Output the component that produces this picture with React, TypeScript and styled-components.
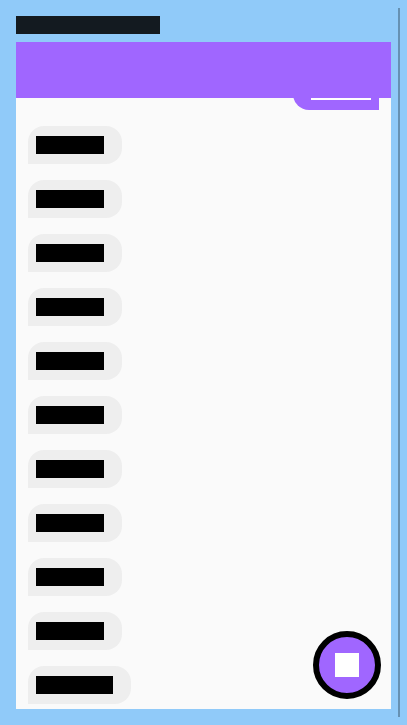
import React from "react";
import styled, { createGlobalStyle } from "styled-components";

const GlobalStyle = createGlobalStyle`
  *, *::before, *::after { box-sizing: border-box; }
  body {
    margin: 0;
    background: #90caf9;
    font-family: Roboto, "Liberation Sans", sans-serif;
  }
`;

const Page = styled.div`
  height: 100vh;
  padding: 8px 7px 8px 8px;
`;

const Column = styled.main`
  display: flex;
  flex-direction: column;
  gap: 8px;
  height: 100%;
  padding: 8px 7px 8px 8px;
  border-right: 2px solid #6691b3;
`;

const Bar = styled.span<{ $width: number; $color: string }>`
  display: block;
  width: ${(p) => p.$width}px;
  height: 18px;
  background: ${(p) => p.$color};
`;

const Panel = styled.section`
  position: relative;
  display: flex;
  flex: 1;
  flex-direction: column;
  min-height: 0;
  background: #fafafa;
`;

const Header = styled.header`
  flex: none;
  height: 56px;
  background: #a066ff;
`;

const Messages = styled.ul`
  display: flex;
  flex: 1;
  flex-direction: column;
  justify-content: flex-end;
  gap: 16px;
  min-height: 0;
  margin: 0;
  padding: 0 12px 5px;
  overflow: hidden;
  list-style: none;
`;

const Bubble = styled.li<{ $own: boolean }>`
  flex: none;
  align-self: ${(p) => (p.$own ? "flex-end" : "flex-start")};
  padding: ${(p) => (p.$own ? "10px 8px 10px 18px" : "10px 18px 10px 8px")};
  border-radius: ${(p) => (p.$own ? "16px 16px 0 16px" : "16px 16px 16px 0")};
  background: ${(p) => (p.$own ? "#a066ff" : "#eeeeee")};
`;

const ActionButton = styled.button`
  position: absolute;
  right: 10px;
  bottom: 10px;
  display: flex;
  align-items: center;
  justify-content: center;
  width: 68px;
  height: 68px;
  padding: 0;
  border: 6px solid #000;
  border-radius: 50%;
  background: #a066ff;
  cursor: pointer;
`;

const messages = [
  { own: true, width: 60 },
  ...Array.from({ length: 10 }, () => ({ own: false, width: 68 })),
  { own: false, width: 77 },
];

export default function App() {
  return (
    <>
      <GlobalStyle />
      <Page>
        <Column>
          <Bar $width={144} $color="#131a20" />
          <Panel>
            <Header />
            <Messages>
              {messages.map((message, index) => (
                <Bubble key={index} $own={message.own}>
                  <Bar $width={message.width} $color={message.own ? "#fff" : "#000"} />
                </Bubble>
              ))}
            </Messages>
            <ActionButton type="button" aria-label="Action">
              <svg width="24" height="24" viewBox="0 0 24 24" aria-hidden="true">
                <rect width="24" height="24" fill="#fff" />
              </svg>
            </ActionButton>
          </Panel>
        </Column>
      </Page>
    </>
  );
}
